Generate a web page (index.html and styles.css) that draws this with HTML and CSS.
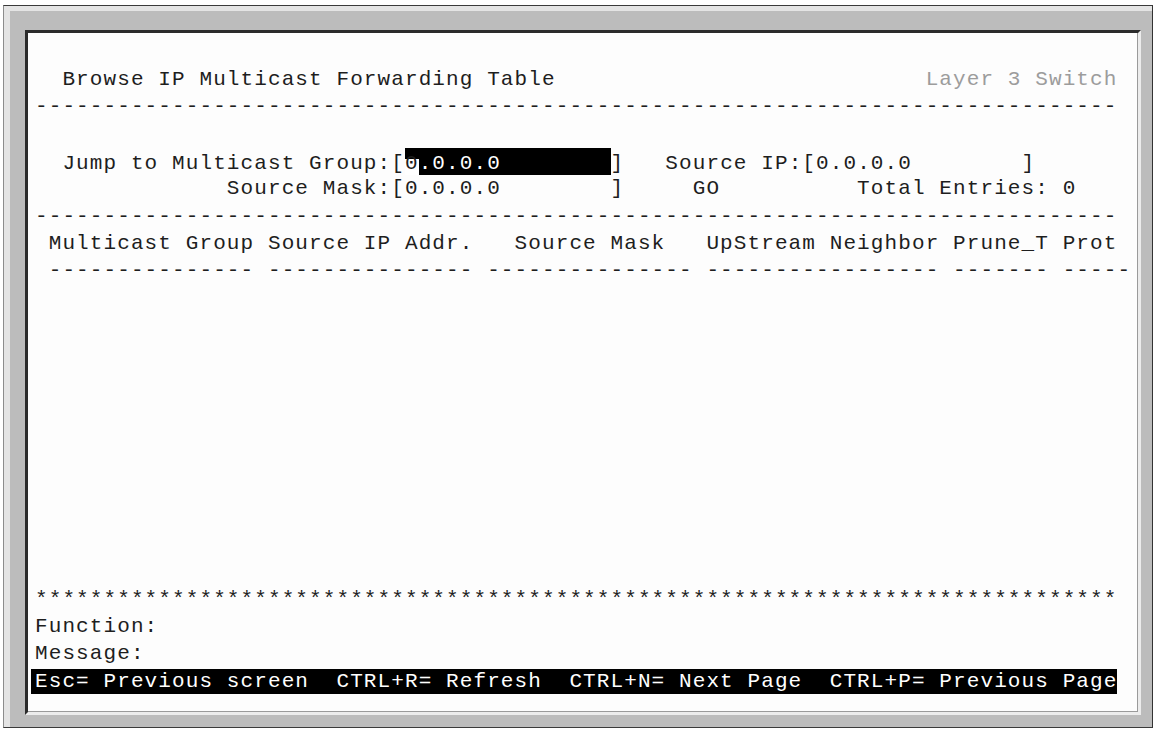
FILE: index.html
```html
<!DOCTYPE html>
<html lang="en">
<head>
    <meta charset="UTF-8">
    <meta name="viewport" content="width=device-width, initial-scale=1.0">
    <title>Browse IP Multicast Forwarding Table</title>
    <link rel="stylesheet" href="styles.css">
</head>
<body>
    <div class="window">
        <div class="screen">
            <!-- 标题 -->
            <div class="row">  Browse IP Multicast Forwarding Table                           <span class="dim">Layer 3 Switch</span></div>
            <div class="row">-------------------------------------------------------------------------------</div>
            <div class="row"></div>

            <!-- 查询条件 -->
            <div class="row">  Jump to Multicast Group:[<span class="field"><span class="cursor">0</span>.0.0.0        </span>]   Source IP:[0.0.0.0        ]</div>
            <div class="row">              Source Mask:[0.0.0.0        ]     GO          Total Entries: 0</div>
            <div class="row">-------------------------------------------------------------------------------</div>

            <!-- 表头 -->
            <div class="row"> Multicast Group Source IP Addr.   Source Mask   UpStream Neighbor Prune_T Prot</div>
            <div class="row"> --------------- --------------- --------------- ----------------- ------- -----</div>

            <!-- 表格内容(空) -->
            <div class="table_body"></div>

            <!-- 底部 -->
            <div class="row">*******************************************************************************</div>
            <div class="row">Function:</div>
            <div class="row">Message:</div>
            <div class="row"><span class="bar">Esc= Previous screen  CTRL+R= Refresh  CTRL+N= Next Page  CTRL+P= Previous Page</span></div>
        </div>
    </div>
</body>
</html>
```
FILE: styles.css
```css
*{
    margin: 0;
    padding: 0;
    box-sizing: border-box;
}
body{
    background: #fff;
    font-family: "Liberation Mono", "DejaVu Sans Mono", monospace;
    font-size: 21px;
    letter-spacing: 1.1px;
    color: #1e1e1e;
}
.window{
    width: 1150px;
    height: 723px;
    margin: 5px 0 0 3px;
    padding: 24px 11px 12px 21px;
    background: #bcbcbc;
    border: 1px solid;
    border-color: #3a3a3a #333 #3a3a3a #8c8c8c;
    box-shadow: inset 6px 5px 0 #e4e4e4;
}
.screen{
    width: 1116px;
    height: 685px;
    padding: 33px 0 0 7px;
    background: #fdfdfd;
    border: 3px solid;
    border-color: #2b2b2b #ececec #ececec #2b2b2b;
    box-shadow: inset -1px -1px 0 #9a9a9a;
    overflow: hidden;
}
.row{
    height: 27.35px;
    line-height: 27.35px;
    white-space: pre;
}
.dim{
    color: #9c9c9c;
}
.field{
    display: inline-block;
    line-height: 23.8px;
    padding-top: 3.5px;
    background: #000;
    color: #fff;
}
.cursor{
    background: linear-gradient(#000 0, #000 6.5px, #fff 6.5px);
    color: #1e1e1e;
}
.table_body{
    height: 300.85px;
}
.bar{
    display: inline-block;
    line-height: 25px;
    margin-left: -4px;
    padding-left: 4px;
    background: #000;
    color: #fff;
}
```
